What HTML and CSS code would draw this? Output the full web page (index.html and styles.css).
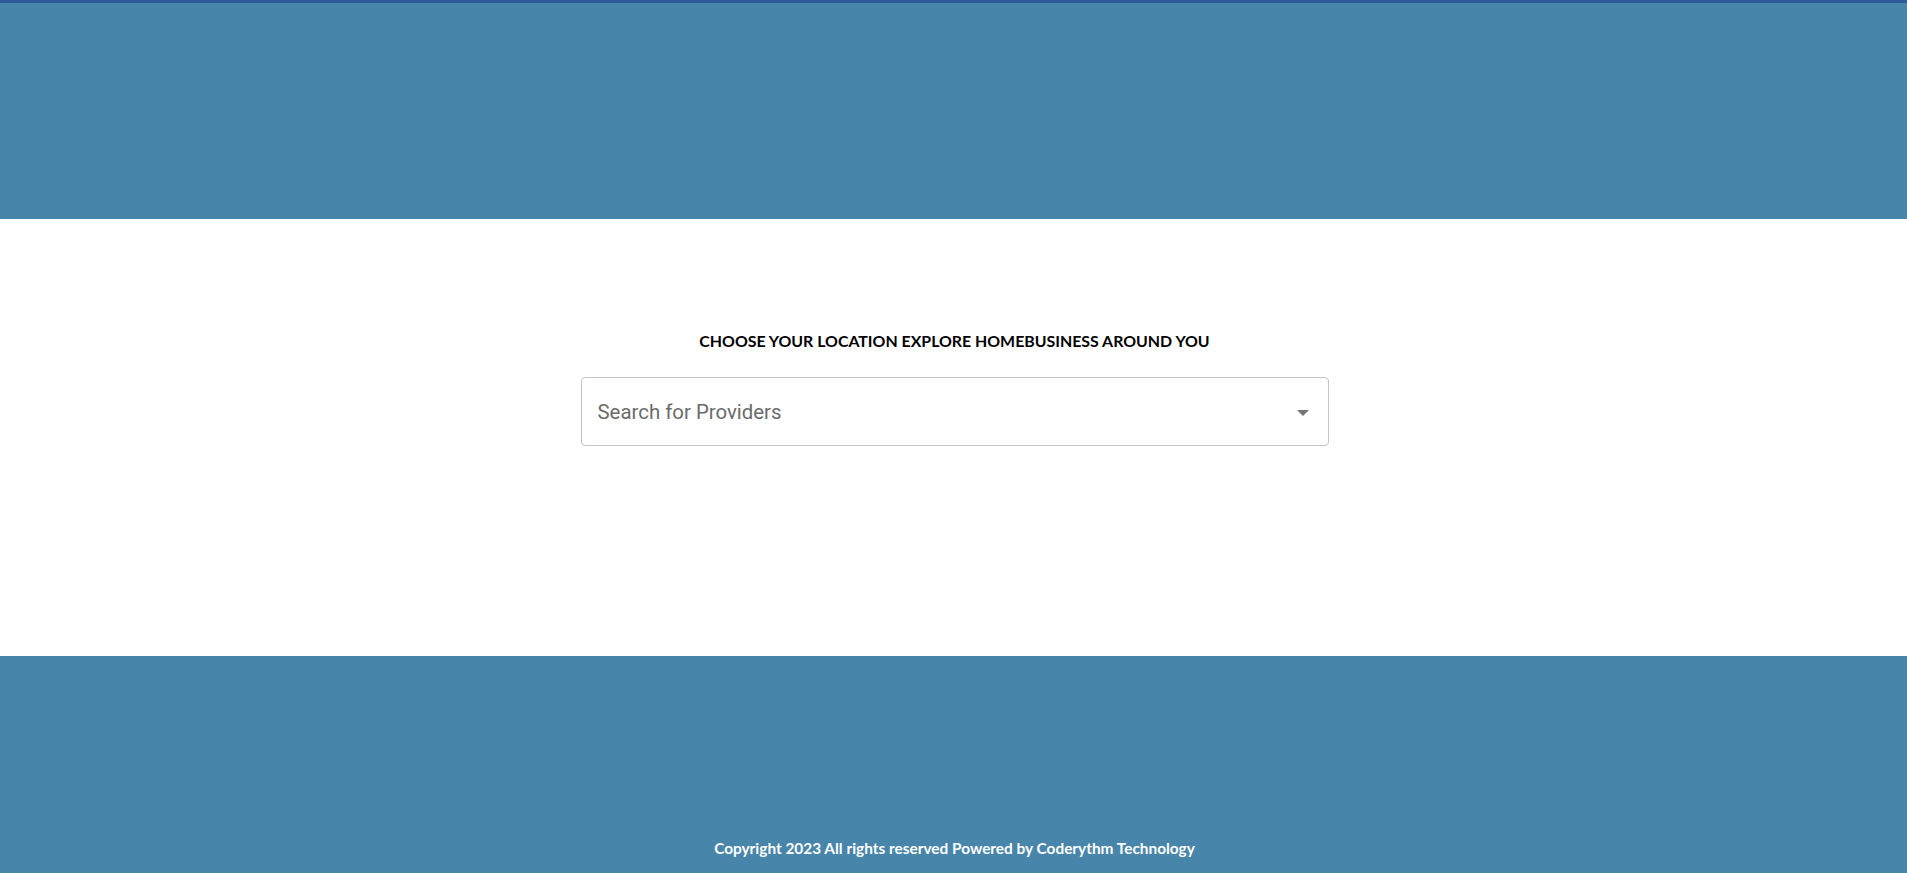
FILE: index.html
```html
<!DOCTYPE html>
<html lang="en">
<head>
<meta charset="utf-8">
<title>Home Business</title>
<link rel="stylesheet" href="styles.css">
</head>
<body>
<header class="hero"></header>
<main class="main">
  <h2 class="title">CHOOSE YOUR LOCATION EXPLORE HOMEBUSINESS AROUND YOU</h2>
  <div class="select">
    <span class="placeholder">Search for Providers</span>
    <svg class="caret" width="12" height="6" viewBox="0 0 12 6"><path d="M0 0h12L6 6z" fill="#757575"/></svg>
  </div>
</main>
<footer class="footer">
  <p class="copy">Copyright 2023 All rights reserved Powered by Coderythm Technology</p>
</footer>
</body>
</html>
```

FILE: styles.css
```css
html, body {
  margin: 0;
  padding: 0;
  background: #fff;
}
body {
  font-family: "Lato", "Liberation Sans", sans-serif;
}
.hero {
  height: 216px;
  background: #4785aa;
  border-top: 3px solid #2e5a9c;
}
.main {
  height: 437px;
  display: flex;
  flex-direction: column;
  align-items: center;
  box-sizing: border-box;
  padding-top: 112px;
}
.title {
  margin: 0 0 0 2px;
  font-size: 15.9px;
  font-weight: 700;
  color: #000;
  line-height: 20px;
}
.select {
  margin-top: 26px;
  margin-left: 2px;
  width: 748px;
  height: 69px;
  box-sizing: border-box;
  border: 1px solid #c4c4c4;
  border-radius: 4px;
  display: flex;
  align-items: center;
  justify-content: space-between;
  padding: 0 19px 0 16px;
}
.placeholder {
  font-family: "Roboto", "Liberation Sans", sans-serif;
  font-size: 20.4px;
  color: #6b6b6b;
}
.caret {
  display: block;
  margin-top: 2px;
}
.footer {
  height: 217px;
  background: #4785aa;
  display: flex;
  align-items: flex-end;
  justify-content: center;
}
.copy {
  margin: 0 0 15px 2px;
  color: #fff;
  font-size: 15.4px;
  font-weight: 700;
  line-height: 20px;
}
```
